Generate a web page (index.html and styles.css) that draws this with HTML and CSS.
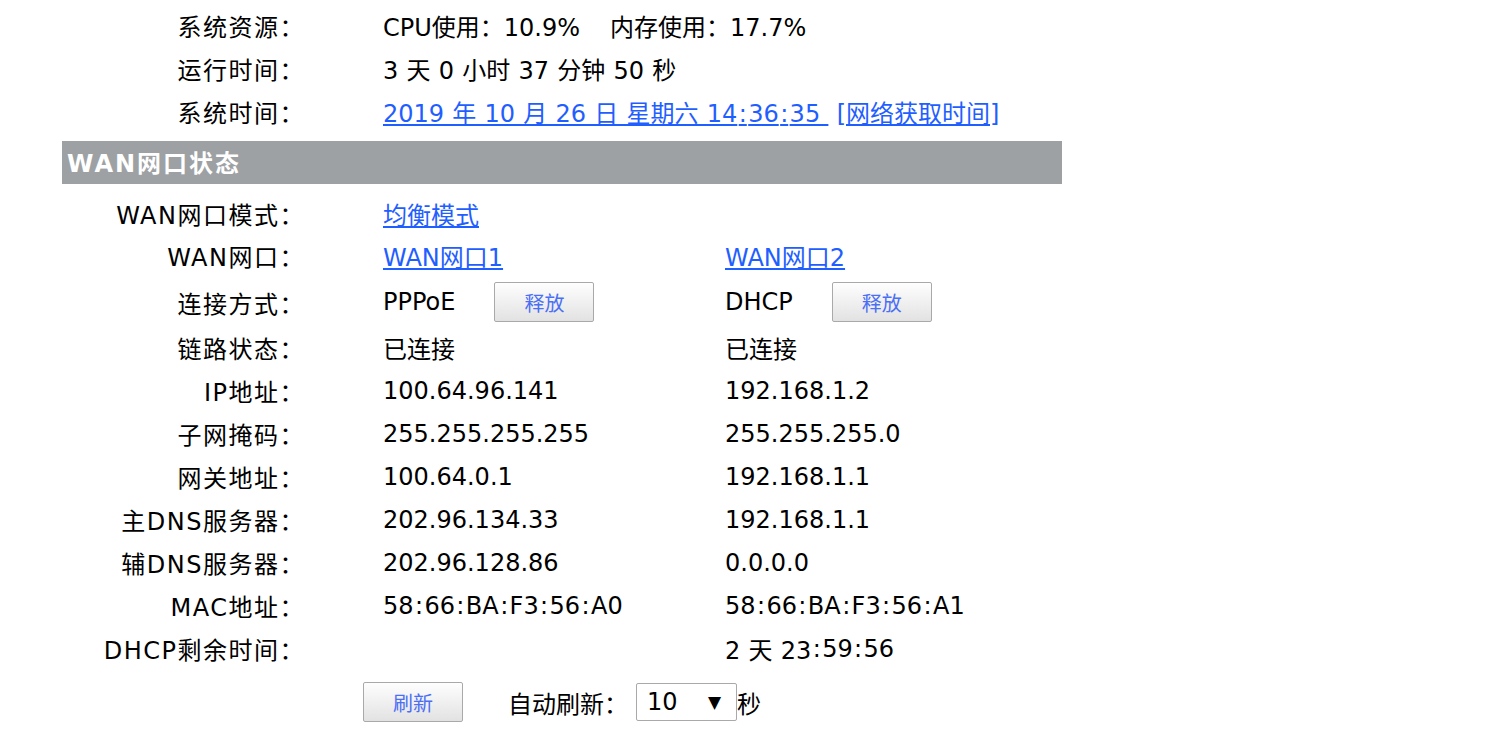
FILE: index.html
```html
<!DOCTYPE html>
<html lang="zh-CN">
<head>
<meta charset="utf-8">
<title>系统状态</title>
<link rel="stylesheet" href="styles.css">
</head>
<body>
<div class="page">
  <div class="section">
    <div class="row">
      <div class="label">系统资源：</div>
      <div class="val wide"><span>CPU使用：10.9%</span><span class="gap">内存使用：17.7%</span></div>
    </div>
    <div class="row">
      <div class="label">运行时间：</div>
      <div class="val wide spaced">3 天 0 小时 37 分钟 50 秒</div>
    </div>
    <div class="row">
      <div class="label">系统时间：</div>
      <div class="val wide spaced"><a href="#" class="link">2019 年 10 月 26 日 星期六 14<span class="c">:</span>36<span class="c">:</span>35&nbsp;</a>&nbsp;<a href="#" class="link">[网络获取时间]</a></div>
    </div>
  </div>

  <div class="bar">WAN网口状态</div>

  <div class="section wan">
    <div class="row">
      <div class="label">WAN网口模式：</div>
      <div class="val wide"><a href="#" class="link">均衡模式</a></div>
    </div>
    <div class="row">
      <div class="label">WAN网口：</div>
      <div class="val"><a href="#" class="link">WAN网口1</a></div>
      <div class="val"><a href="#" class="link">WAN网口2</a></div>
    </div>
    <div class="row tall">
      <div class="label">连接方式：</div>
      <div class="val">PPPoE<button class="btn">释放</button></div>
      <div class="val">DHCP<button class="btn">释放</button></div>
    </div>
    <div class="row">
      <div class="label">链路状态：</div>
      <div class="val">已连接</div>
      <div class="val">已连接</div>
    </div>
    <div class="row">
      <div class="label">IP地址：</div>
      <div class="val">100.64.96.141</div>
      <div class="val">192.168.1.2</div>
    </div>
    <div class="row">
      <div class="label">子网掩码：</div>
      <div class="val">255.255.255.255</div>
      <div class="val">255.255.255.0</div>
    </div>
    <div class="row">
      <div class="label">网关地址：</div>
      <div class="val">100.64.0.1</div>
      <div class="val">192.168.1.1</div>
    </div>
    <div class="row">
      <div class="label">主DNS服务器：</div>
      <div class="val">202.96.134.33</div>
      <div class="val">192.168.1.1</div>
    </div>
    <div class="row">
      <div class="label">辅DNS服务器：</div>
      <div class="val">202.96.128.86</div>
      <div class="val">0.0.0.0</div>
    </div>
    <div class="row">
      <div class="label">MAC地址：</div>
      <div class="val">58<span class="c">:</span>66<span class="c">:</span>BA<span class="c">:</span>F3<span class="c">:</span>56<span class="c">:</span>A0</div>
      <div class="val">58<span class="c">:</span>66<span class="c">:</span>BA<span class="c">:</span>F3<span class="c">:</span>56<span class="c">:</span>A1</div>
    </div>
    <div class="row">
      <div class="label">DHCP剩余时间：</div>
      <div class="val"></div>
      <div class="val spaced">2 天 23<span class="c">:</span>59<span class="c">:</span>56</div>
    </div>
  </div>

  <div class="actions">
    <button class="btn refresh">刷新</button>
    <span class="auto">自动刷新：</span>
    <div class="select"><span>10</span><span class="arrow">▼</span></div>
    <span>秒</span>
  </div>
</div>
</body>
</html>
```
FILE: styles.css
```css
html, body {
  margin: 0;
  padding: 0;
  background: #fff;
}
body {
  font-family: "DejaVu Sans", "Noto Sans CJK SC", sans-serif;
  font-size: 24px;
  color: #000;
}
.page {
  margin-left: 62px;
  width: 1000px;
  padding-top: 6px;
}
.row {
  display: grid;
  grid-template-columns: 243px 420px 1fr;
  height: 43px;
  padding-bottom: 4px;
  box-sizing: border-box;
  align-items: center;
  white-space: nowrap;
}
.row.tall {
  height: 49px;
  padding-bottom: 3px;
}
.wan .row:first-child {
  padding-bottom: 3px;
}
.label {
  text-align: right;
  letter-spacing: 1.5px;
}
.val {
  display: flex;
  align-items: center;
}
.row .val:nth-child(2) {
  padding-left: 78px;
}
.val.wide {
  grid-column: 2 / span 2;
}
.spaced {
  word-spacing: 0.6px;
}
.c {
  margin: 0 1.4px;
}
.gap {
  margin-left: 30px;
}
.link {
  color: #1f5eff;
  text-decoration: underline;
}
.bar {
  margin-top: 6px;
  height: 43px;
  background: #9ea1a4;
  color: #fff;
  font-weight: bold;
  font-size: 24px;
  letter-spacing: 2px;
  display: flex;
  align-items: center;
  padding-left: 5px;
  padding-bottom: 2px;
  box-sizing: border-box;
}
.wan {
  margin-top: 9px;
}
.btn {
  width: 100px;
  height: 40px;
  margin-left: 39px;
  border: 1px solid #a9a9a9;
  border-radius: 2px;
  background: linear-gradient(#fefefe, #e2e2e2);
  color: #4a6ef5;
  font-family: "Noto Sans CJK SC", "DejaVu Sans", sans-serif;
  font-size: 20px;
  padding: 0;
}
.actions {
  display: flex;
  align-items: center;
  height: 48px;
  margin-top: 6px;
  padding-left: 301px;
}
.btn.refresh {
  margin-left: 0;
}
.auto {
  margin-left: 45px;
}
.select {
  width: 101px;
  height: 38px;
  box-sizing: border-box;
  border: 1px solid #a9a9a9;
  border-radius: 2px;
  margin-left: 8px;
  display: flex;
  align-items: center;
  justify-content: space-between;
  padding: 0 15px 0 10px;
}
.arrow {
  font-size: 17px;
}
```
